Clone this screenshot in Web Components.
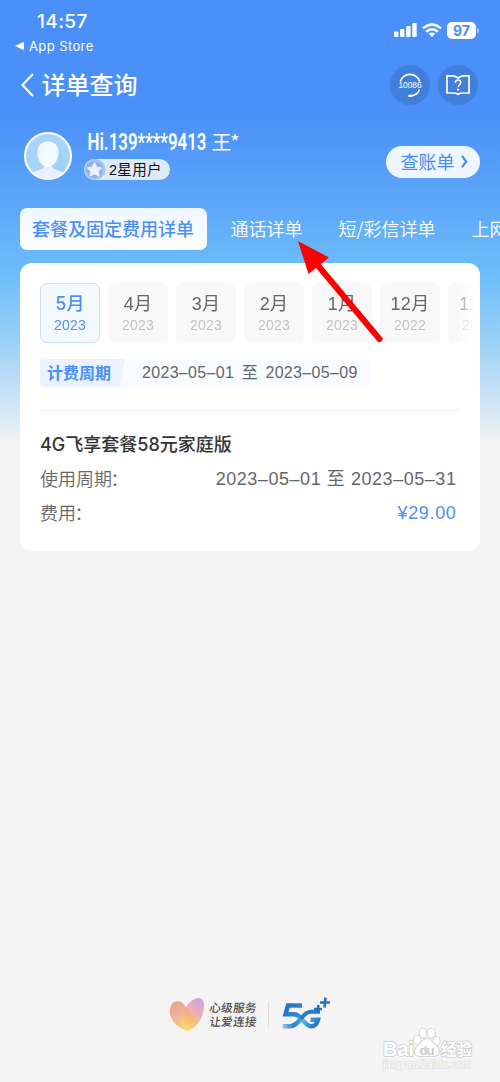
<!DOCTYPE html>
<html lang="zh-CN">
<head>
<meta charset="UTF-8">
<meta name="viewport" content="width=device-width, initial-scale=1">
<title>详单查询</title>
<style>
  html, body { margin: 0; padding: 0; }
  body {
    font-family: 'Liberation Sans', 'Noto Sans CJK SC', sans-serif;
    background: #f4f4f4;
    overflow: hidden;
  }
</style>
</head>
<body>
<detail-page>
  <status-bar slot="top" time="14:57" back="App Store" battery="97"></status-bar>
  <nav-bar slot="top">详单查询</nav-bar>
  <user-profile slot="top" phone="Hi.139****9413" surname="王*" level="2星用户">查账单</user-profile>
  <tab-strip slot="top">
    <tab-item active>套餐及固定费用详单</tab-item>
    <tab-item>通话详单</tab-item>
    <tab-item>短/彩信详单</tab-item>
    <tab-item>上网</tab-item>
  </tab-strip>
  <bill-card>
    <month-strip slot="months">
      <month-item active year="2023">5月</month-item>
      <month-item year="2023">4月</month-item>
      <month-item year="2023">3月</month-item>
      <month-item year="2023">2月</month-item>
      <month-item year="2023">1月</month-item>
      <month-item year="2022">12月</month-item>
      <month-item year="2022">11月</month-item>
    </month-strip>
    <billing-period slot="period" from="2023–05–01" to="2023–05–09">计费周期</billing-period>
    <span slot="title">4G飞享套餐58元家庭版</span>
    <bill-row label="使用周期"><span>2023–05–01 至 2023–05–31</span></bill-row>
    <bill-row label="费用" price><span>¥29.00</span></bill-row>
  </bill-card>
  <brand-footer slot="footer"></brand-footer>
  <pointer-arrow slot="overlay"></pointer-arrow>
  <site-watermark slot="overlay"></site-watermark>
</detail-page>

<script>
class BaseElement extends HTMLElement {
  constructor() {
    super();
    this._shadow = this.attachShadow({ mode: 'open' });
  }

  connectedCallback() {
    this._shadow.innerHTML = `<style>${this._getStyles()}</style>${this._getMarkup()}`;
  }
}

class DetailPage extends BaseElement {
  _getStyles() {
    return `
      :host {
        display: flex;
        flex-direction: column;
        position: relative;
        box-sizing: border-box;
        width: 500px;
        height: 1082px;
        overflow: hidden;
        background: linear-gradient(#4b90f8 0, #4b90f8 115px, #5da6f9 200px, #6dbefa 275px,
          #96cff7 335px, #c4e0f5 390px, #f4f4f4 445px);
      }
      main { padding: 13px 20px 0; flex: 1; }
    `;
  }

  _getMarkup() {
    return `
      <slot name="top"></slot>
      <main><slot></slot></main>
      <slot name="footer"></slot>
      <slot name="overlay"></slot>
    `;
  }
}

class StatusBar extends BaseElement {
  _getStyles() {
    return `
      :host {
        display: flex;
        justify-content: space-between;
        box-sizing: border-box;
        height: 60px;
        padding: 10px 21px 0 15px;
        color: #fff;
        font-family: Inter, sans-serif;
      }
      .time { font-size: 19px; line-height: 24px; font-weight: 500; padding-left: 22px; letter-spacing: .4px; }
      .back { display: flex; align-items: center; gap: 5px; font-size: 13px; line-height: 24px; letter-spacing: .4px; }
      .icons { display: flex; align-items: center; height: 40px; gap: 5px; }
      svg { display: block; }
      .battery {
        width: 29px; height: 17px; border-radius: 5px; background: #fff; color: #4b90f8;
        font-size: 14px; line-height: 17px; font-weight: 700; text-align: center;
      }
      .cap { width: 2px; height: 5px; border-radius: 0 2px 2px 0; background: #a5c8fb; margin-left: -4px; }
    `;
  }

  _getMarkup() {
    return `
      <div>
        <div class="time">${this.getAttribute('time')}</div>
        <div class="back">
          <svg width="9" height="8"><path d="M0 4 8 .3Q9 0 9 1v6q0 1-1 .7z" fill="#fff"/></svg>
          <span>${this.getAttribute('back')}</span>
        </div>
      </div>
      <div class="icons">
        <svg width="23" height="14" fill="#fff">
          <rect y="8.6" width="4.4" height="5.4" rx="1"/>
          <rect x="6.1" y="6" width="4.4" height="8" rx="1"/>
          <rect x="12.2" y="3" width="4.4" height="11" rx="1"/>
          <rect x="18.3" width="4.4" height="14" rx="1"/>
        </svg>
        <svg width="20" height="14" fill="none" stroke="#fff" stroke-width="2.5">
          <path d="M1 5.4Q10-2.5 19 5.4M4.2 8.8q5.800-5 11.600 0"/>
          <path d="M10 14l-3.200-3.200q3.200-2.600 6.400 0z" fill="#fff" stroke="none"/>
        </svg>
        <div class="battery">${this.getAttribute('battery')}</div>
        <i class="cap"></i>
      </div>
    `;
  }
}

class NavBar extends BaseElement {
  _getStyles() {
    return `
      :host {
        display: flex;
        align-items: center;
        height: 50px;
        padding: 0 22.500px 0 21px;
        color: #fff;
        font-family: 'Noto Sans CJK SC', sans-serif;
      }
      h1 { flex: 1; margin: -2px 0 0 7.500px; font-size: 24px; line-height: 34px; font-weight: 500; }
      .round {
        display: grid; place-items: center; width: 40px; height: 40px; margin: -1px 0 0 8px;
        border-radius: 50%; background: #427fdc;
      }
      svg { display: block; }
    `;
  }

  _getMarkup() {
    return `
      <svg width="13" height="24" fill="none" stroke="#fff" stroke-width="2.1"><path d="M12 1 1.500 12 12 23"/></svg>
      <h1><slot></slot></h1>
      <span class="round">
        <svg width="26" height="26" fill="none" stroke="#fff">
          <path d="M3.300 9.500a10 9.500 0 0 1 19.400 0" stroke-width="1.700"/>
          <path d="M22.400 17.500q-1.700 5.800-9 6.300" stroke-width="1.500"/>
          <path d="M12.300 23.900h2.200" stroke-width="2.400" stroke-linecap="round"/>
          <text x="1.500" y="16.300" font-family="Liberation Sans" font-size="8.300" fill="#fff" stroke="none" textLength="23">10086</text>
        </svg>
      </span>
      <span class="round">
        <svg width="26" height="22" fill="none" stroke="#fff" stroke-width="1.700">
          <path d="M13 4Q9.500 1.700 7 1.900H2V19h6q3 0 5 1.300 2-1.300 5-1.300h6V1.900h-5Q16.500 1.700 13 4z"/>
          <path d="M10.300 9q0-3 2.700-3t2.700 2.700c0 2-2.600 2.100-2.600 4.500" stroke-width="1.500"/>
          <circle cx="13.100" cy="15.700" r="1.100" fill="#fff" stroke="none"/>
        </svg>
      </span>
    `;
  }
}

class UserProfile extends BaseElement {
  _getStyles() {
    return `
      :host {
        display: flex;
        box-sizing: border-box;
        height: 98px;
        padding: 22px 20px 0 24px;
        font-family: 'Noto Sans CJK SC', sans-serif;
      }
      svg { display: block; }
      .info { flex: 1; padding-left: 12px; margin-top: -2px; }
      .level {
        display: flex; align-items: center; width: 86px; height: 21px; margin-top: 2px;
        border-radius: 11px; background: #dfe9f8; color: #111;
        font: 14.500px/21px 'Liberation Sans', 'Noto Sans CJK SC', sans-serif;
      }
      .level span { margin: 1px 0 0 3px; white-space: nowrap; letter-spacing: .3px; }
      .bill {
        display: flex; align-items: center; justify-content: center; gap: 6px;
        box-sizing: border-box; padding-left: 2px;
        width: 94px; height: 32px; margin-top: 13.500px; border-radius: 16px;
        background: #f0f6ff; color: #488cf5; font-size: 18px; line-height: 28px;
      }
      .bill span { margin-top: -2px; }
    `;
  }

  _getMarkup() {
    return `
      <svg width="48" height="48" viewBox="0 0 48 48">
        <defs><clipPath id="face"><circle cx="24" cy="24" r="22.500"/></clipPath></defs>
        <circle cx="24" cy="24" r="23" fill="#a7d4fa" stroke="#fff" stroke-width="2"/>
        <g clip-path="url(#face)">
          <path d="M33 17q5 13-5 21l13 3-3-17z" fill="#98c5f1" opacity=".5"/>
          <path d="M6 48q1-8 9-10 5-1 6-5h6q1 4 6 5 8 2 9 10z" fill="#eaf1fe"/>
          <path d="M24 9.500c7 0 10.500 4 10.500 11.500S29 35 24 35s-10.500-6-10.500-14S17 9.500 24 9.500z" fill="#f4f8ff"/>
        </g>
      </svg>
      <div class="info">
        <svg width="170" height="27" fill="#fff">
          <text x="3.500" y="20" font-family="Roboto" font-size="23.500" font-weight="600" textLength="119" lengthAdjust="spacingAndGlyphs">${this.getAttribute('phone')}</text>
          <text x="127.500" y="19.500" font-family="Noto Sans CJK SC" font-size="20" font-weight="400" textLength="28">${this.getAttribute('surname')}</text>
        </svg>
        <div class="level">
          <svg width="22" height="21" viewBox="0 0 22 21">
            <circle cx="11" cy="10.500" r="10.500" fill="#a9c6f2"/>
            <circle cx="10.500" cy="10.500" r="8.500" fill="#8fb3ed"/>
            <path d="m10.500 4 2 4.300 4.700.6-3.400 3.200.9 4.600-4.200-2.200-4.200 2.200.9-4.600-3.400-3.200 4.700-.6z" fill="#e9f1ff" stroke="#e9f1ff" stroke-width="1.500" stroke-linejoin="round"/>
          </svg>
          <span>${this.getAttribute('level')}</span>
        </div>
      </div>
      <div class="bill">
        <span><slot></slot></span>
        <svg width="7" height="13" fill="none" stroke="#488cf5" stroke-width="2.200"><path d="M1 .8 5.300 6.500 1 12.200"/></svg>
      </div>
    `;
  }
}

class TabStrip extends BaseElement {
  _getStyles() {
    return `
      :host { display: flex; height: 42px; padding-left: 20px; overflow: hidden; gap: 12px; }
    `;
  }

  _getMarkup() {
    return '<slot></slot>';
  }
}

class TabItem extends BaseElement {
  _getStyles() {
    return `
      :host {
        flex: none;
        padding: 0 12.500px 0 11.500px;
        border-radius: 7px;
        color: #fff;
        font: 350 18px/40px 'Noto Sans CJK SC', sans-serif;
        white-space: nowrap;
      }
      :host([active]) {
        padding: 0 13px 0 12px;
        background: linear-gradient(#edf6ff, #fff);
        color: #4b90f8;
        font-weight: 500;
      }
    `;
  }

  _getMarkup() {
    return '<slot></slot>';
  }
}

class BillCard extends BaseElement {
  _getStyles() {
    return `
      :host {
        display: flex;
        flex-direction: column;
        box-sizing: border-box;
        height: 288px;
        padding: 20px;
        border-radius: 12px;
        background: #fff;
      }
      hr { width: 100%; height: 1px; margin: 23px 0 18px; border: 0; background: #efefef; }
      h2 {
        margin: 0 0 1px; color: #333; font: 500 18px/32px Inter, 'Noto Sans CJK SC', sans-serif;
        white-space: nowrap;
      }
    `;
  }

  _getMarkup() {
    return `
      <slot name="months"></slot>
      <slot name="period"></slot>
      <hr>
      <h2><slot name="title"></slot></h2>
      <slot></slot>
    `;
  }
}

class MonthStrip extends BaseElement {
  _getStyles() {
    return `
      :host { display: flex; gap: 8px; width: 434px; height: 60px; overflow: hidden;
        -webkit-mask-image: linear-gradient(90deg, #000 412px, transparent 434px);
        mask-image: linear-gradient(90deg, #000 412px, transparent 434px); }
    `;
  }

  _getMarkup() {
    return '<slot></slot>';
  }
}

class MonthItem extends BaseElement {
  _getStyles() {
    return `
      :host {
        display: flex;
        flex: none;
        flex-direction: column;
        align-items: center;
        box-sizing: border-box;
        width: 60px;
        height: 60px;
        padding-top: 8px;
        border: 1px solid #f8f8f8;
        border-radius: 7px;
        background: #f8f8f8;
        color: #666;
      }
      :host([active]) { border-color: #cadefc; background: #f4f8ff; color: #4b90f8; }
      b { font: 400 18px/24px 'Liberation Sans', 'Noto Sans CJK SC', sans-serif; letter-spacing: .3px; white-space: nowrap; }
      small { font-size: 14px; line-height: 19px; color: #c3c3c3; letter-spacing: .2px; }
      :host([active]) b { font-family: Inter, 'Noto Sans CJK SC', sans-serif; font-weight: 500; }
      :host([active]) small { color: #4b90f8; }
    `;
  }

  _getMarkup() {
    return `<b><slot></slot></b><small>${this.getAttribute('year')}</small>`;
  }
}

class BillingPeriod extends BaseElement {
  _getStyles() {
    return `
      :host {
        display: flex;
        width: 331px;
        height: 28px;
        margin-top: 16px;
        border-radius: 4px;
        background: #f8fbff;
        overflow: hidden;
        font-size: 16px;
        line-height: 27px;
      }
      b {
        box-sizing: border-box; width: 85px; padding-left: 7px; background: #eaf2ff; color: #4b90f8;
        font: 700 16px/27px 'Noto Sans CJK SC', sans-serif;
        clip-path: polygon(0 0, 100% 0, 79px 100%, 0 100%);
      }
      .range { padding-left: 17px; color: #666; letter-spacing: .32px; word-spacing: 2.700px; white-space: nowrap; }
    `;
  }

  _getMarkup() {
    return `
      <b><slot></slot></b>
      <span class="range">${this.getAttribute('from')} 至 ${this.getAttribute('to')}</span>
    `;
  }
}

class BillRow extends BaseElement {
  _getStyles() {
    return `
      :host {
        display: flex;
        justify-content: space-between;
        padding-right: 3.500px;
        height: 34px;
        color: #666;
        font-size: 18px;
        line-height: 34px;
        white-space: nowrap;
      }
      .label { font: 350 18px/32px 'Noto Sans CJK SC', sans-serif; }
      .label i { font-style: normal; margin-left: -1.500px; }
      .value { letter-spacing: .55px; }
      :host([price]) .value { color: #4b90f8; letter-spacing: .65px; }
    `;
  }

  _getMarkup() {
    return `<span class="label">${this.getAttribute('label')}<i>：</i></span><span class="value"><slot></slot></span>`;
  }
}

class BrandFooter extends BaseElement {
  _getStyles() {
    return `
      :host { display: flex; justify-content: center; height: 90px; }
      svg { display: block; }
    `;
  }

  _getMarkup() {
    return `
      <svg width="164" height="42" viewBox="0 0 164 42">
        <defs>
          <linearGradient id="left" x1="0" y1="0" x2=".5" y2="1">
            <stop stop-color="#eda08e"/><stop offset=".55" stop-color="#f2b3a0"/><stop offset="1" stop-color="#f6d65f"/>
          </linearGradient>
          <linearGradient id="right" x1=".8" y1="0" x2=".3" y2="1">
            <stop stop-color="#bf98e5"/><stop offset=".4" stop-color="#efa0a9"/><stop offset=".75" stop-color="#f7bd69"/><stop offset="1" stop-color="#f7df71"/>
          </linearGradient>
          <linearGradient id="five" gradientUnits="userSpaceOnUse" x1="116" y1="12" x2="148" y2="38">
            <stop stop-color="#2270c0"/><stop offset=".45" stop-color="#2f8ad6"/><stop offset=".62" stop-color="#55b6ea"/><stop offset="1" stop-color="#1f66b4"/>
          </linearGradient>
          <linearGradient id="swoosh" gradientUnits="userSpaceOnUse" x1="113" y1="0" x2="133" y2="0">
            <stop stop-color="#b5cee6"/><stop offset=".6" stop-color="#2f80cc"/><stop offset="1" stop-color="#3ea2e2"/>
          </linearGradient>
        </defs>
        <path d="M20 39C8 36-1 25 2.500 14.500 5 7 14 8 17 14c8 7 12 19 3 25z" fill="url(#left)"/>
        <path d="M20 39c-9-4-9-17-2-24C25 5 34 3 36 11c1 12-6 24-16 28z" fill="url(#right)" opacity=".85"/>
        <g font-family="Noto Sans CJK SC" font-size="11.500" font-weight="500" fill="#4b4b4b">
          <text transform="translate(41 20) skewX(-7)" textLength="47">心级服务</text>
          <text transform="translate(41 34) skewX(-7)" textLength="47">让爱连接</text>
        </g>
        <path d="M100.500 10v26" stroke="#dedede"/>
        <path d="M114.500 34.200h7c6 0 8-4 12-8" fill="none" stroke="url(#swoosh)" stroke-width="4.400"/>
        <path d="M134 13.500h-14l-2.500 8.800h8c5 0 7 3 9.500 6 3 4 5 6 8.500 6 3.500 0 5.500-2.500 6.500-6.500h-7.500" fill="none" stroke="url(#five)" stroke-width="4.400"/>
        <path d="M133 27c3-5 6-7.300 10.500-7.300h8.500" fill="none" stroke="#2b7bc8" stroke-width="4"/>
        <path d="M146 17h8m-3.600-4-.8 8M152 10.500h10m-4.500-5-1 10.200" fill="none" stroke="#2674bd" stroke-width="2.600"/>
      </svg>
    `;
  }
}

class PointerArrow extends BaseElement {
  _getStyles() {
    return `
      :host { position: absolute; left: 295px; top: 238px; pointer-events: none; }
      svg { display: block; }
    `;
  }

  _getMarkup() {
    return `
      <svg width="92" height="108">
        <path d="M20 24 84.500 101" stroke="#f00" stroke-width="6" stroke-linecap="round"/>
        <path d="M3 3 34 19.500 13.500 36z" fill="#f00"/>
      </svg>
    `;
  }
}

class SiteWatermark extends BaseElement {
  _getStyles() {
    return `
      :host { position: absolute; left: 380px; top: 1026px; }
      svg { display: block; }
    `;
  }

  _getMarkup() {
    return `
      <svg width="96" height="48" fill="#fff" stroke="#cfcfcf" stroke-width="1.600" paint-order="stroke" stroke-linejoin="round">
        <text x="3" y="30" font-family="Liberation Sans" font-weight="700" font-size="20" textLength="31">Bai</text>
        <ellipse cx="37.500" cy="14" rx="3.200" ry="4.200"/>
        <ellipse cx="43" cy="7" rx="3.500" ry="4.600"/>
        <ellipse cx="51.500" cy="7" rx="3.500" ry="4.600"/>
        <ellipse cx="56.500" cy="15" rx="3.200" ry="4.200"/>
        <path d="M47 13c4 0 6 4 9 7 6 5 2 11-4 10H42c-7 1-10-5-4-10 3-3 5-7 9-7z"/>
        <text x="39.500" y="28.500" font-family="Liberation Sans" font-weight="700" font-size="13" fill="#c9c9c9" stroke="none" textLength="15">du</text>
        <text x="61" y="29" font-family="Noto Sans CJK SC" font-weight="700" font-size="15.500" textLength="31">经验</text>
        <text x="3" y="42" font-family="Liberation Sans" font-size="10.500" stroke="#dcdcdc" stroke-width="1.400" textLength="88">jingyan.baidu.com</text>
      </svg>
    `;
  }
}

customElements.define('detail-page', DetailPage);
customElements.define('status-bar', StatusBar);
customElements.define('nav-bar', NavBar);
customElements.define('user-profile', UserProfile);
customElements.define('tab-strip', TabStrip);
customElements.define('tab-item', TabItem);
customElements.define('bill-card', BillCard);
customElements.define('month-strip', MonthStrip);
customElements.define('month-item', MonthItem);
customElements.define('billing-period', BillingPeriod);
customElements.define('bill-row', BillRow);
customElements.define('brand-footer', BrandFooter);
customElements.define('pointer-arrow', PointerArrow);
customElements.define('site-watermark', SiteWatermark);
</script>
</body>
</html>
